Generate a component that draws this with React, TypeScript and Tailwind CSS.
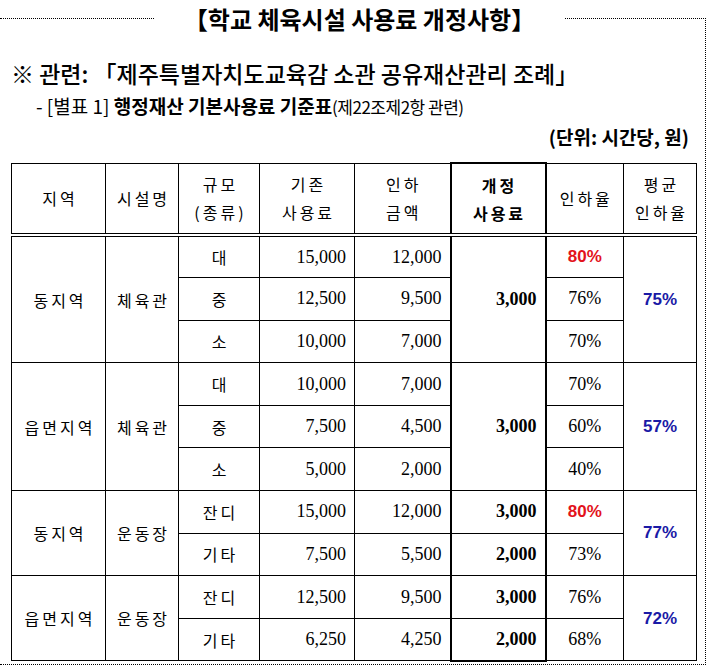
import React from "react";

const KR = "font-['Noto_Sans_CJK_KR',sans-serif]";
const CELL = "font-['Liberation_Serif','Noto_Sans_CJK_KR',serif]";

type Item = {
  size: string;
  oldFee: string;
  cut: string;
  rate: string;
  red?: boolean;
  fee?: string;
};

type Group = {
  region: string;
  facility: string;
  avg: string;
  fee?: string;
  items: Item[];
};

const GROUPS: Group[] = [
  {
    region: "동지역",
    facility: "체육관",
    avg: "75%",
    fee: "3,000",
    items: [
      { size: "대", oldFee: "15,000", cut: "12,000", rate: "80%", red: true },
      { size: "중", oldFee: "12,500", cut: "9,500", rate: "76%" },
      { size: "소", oldFee: "10,000", cut: "7,000", rate: "70%" },
    ],
  },
  {
    region: "읍면지역",
    facility: "체육관",
    avg: "57%",
    fee: "3,000",
    items: [
      { size: "대", oldFee: "10,000", cut: "7,000", rate: "70%" },
      { size: "중", oldFee: "7,500", cut: "4,500", rate: "60%" },
      { size: "소", oldFee: "5,000", cut: "2,000", rate: "40%" },
    ],
  },
  {
    region: "동지역",
    facility: "운동장",
    avg: "77%",
    items: [
      { size: "잔디", oldFee: "15,000", cut: "12,000", rate: "80%", red: true, fee: "3,000" },
      { size: "기타", oldFee: "7,500", cut: "5,500", rate: "73%", fee: "2,000" },
    ],
  },
  {
    region: "읍면지역",
    facility: "운동장",
    avg: "72%",
    items: [
      { size: "잔디", oldFee: "12,500", cut: "9,500", rate: "76%", fee: "3,000" },
      { size: "기타", oldFee: "6,250", cut: "4,250", rate: "68%", fee: "2,000" },
    ],
  },
];

const th =
  "border-t border-x border-b-4 [border-bottom-style:double] border-black p-0 font-normal text-[16px] leading-[28px] tracking-[3px] pl-[3px] text-center";
const td = "border border-black p-0";
const feeTd = "border-t border-x-2 border-black p-0 text-right pr-[8px] font-bold text-[18px]";
const korTd = `${td} ${KR} text-[16px] tracking-[3px] pl-[3px] text-center`;
const numTd = `${td} text-[18px] text-right pr-[8px]`;

export default function App() {
  return (
    <div className="w-[707px] h-[668px] bg-white text-black overflow-hidden">
      <div className="w-[706px] h-[647px] mt-[18px] border-t border-r border-b border-dotted border-black">
        <div className="flex justify-center pl-[14px] -mt-[13px] h-[26px]">
          <span className={`${KR} bg-white px-[29px] text-[24px] leading-[26px] font-bold`}>
            【학교 체육시설 사용료 개정사항】
          </span>
        </div>

        <div className={`${KR} mt-[27px] ml-[11px] h-[28px] text-[23px] leading-[28px] font-medium`}>
          ※ 관련: 「제주특별자치도교육감 소관 공유재산관리 조례」
        </div>

        <div className={`${KR} mt-[8px] ml-[36px] h-[22px] text-[19px] leading-[22px]`}>
          - [별표 1] <span className="font-bold">행정재산 기본사용료 기준표</span>
          <span className="text-[17px] tracking-[-0.5px]">(제22조제2항 관련)</span>
        </div>

        <div className={`${KR} mt-[8px] h-[24px] pr-[16px] text-right text-[19px] leading-[24px] font-bold`}>
          (단위: 시간당, 원)
        </div>

        <table className={`${CELL} mt-[13px] ml-[11px] w-[685px] table-fixed border-collapse`}>
          <colgroup>
            <col className="w-[94px]" />
            <col className="w-[73px]" />
            <col className="w-[81px]" />
            <col className="w-[95px]" />
            <col className="w-[96px]" />
            <col className="w-[95px]" />
            <col className="w-[78px]" />
            <col className="w-[73px]" />
          </colgroup>
          <thead>
            <tr className={`${KR} h-[72px]`}>
              <th className={th}>지역</th>
              <th className={th}>시설명</th>
              <th className={th}>
                규모
                <br />
                (종류)
              </th>
              <th className={th}>
                기존
                <br />
                사용료
              </th>
              <th className={th}>
                인하
                <br />
                금액
              </th>
              <th className="border-t-2 border-x-2 border-b-4 [border-bottom-style:double] border-black p-0 font-bold text-[16px] leading-[28px] tracking-[3px] pl-[3px] text-center">
                개정
                <br />
                사용료
              </th>
              <th className={th}>인하율</th>
              <th className={th}>
                평균
                <br />
                인하율
              </th>
            </tr>
          </thead>
          <tbody>
            {GROUPS.map((g, gi) =>
              g.items.map((it, i) => {
                const lastGroup = gi === GROUPS.length - 1;
                const lastRow = lastGroup && i === g.items.length - 1;
                return (
                  <tr key={`${gi}-${i}`} className="h-[42.6px]">
                    {i === 0 && (
                      <td rowSpan={g.items.length} className={korTd}>
                        {g.region}
                      </td>
                    )}
                    {i === 0 && (
                      <td rowSpan={g.items.length} className={korTd}>
                        {g.facility}
                      </td>
                    )}
                    <td className={korTd}>{it.size}</td>
                    <td className={numTd}>{it.oldFee}</td>
                    <td className={numTd}>{it.cut}</td>
                    {g.fee && i === 0 && (
                      <td rowSpan={g.items.length} className={`${feeTd} border-b`}>
                        {g.fee}
                      </td>
                    )}
                    {it.fee && (
                      <td className={`${feeTd} ${lastRow ? "border-b-2" : "border-b"}`}>{it.fee}</td>
                    )}
                    <td className={`${td} text-center`}>
                      {it.red ? (
                        <span className="font-['Liberation_Sans',sans-serif] font-bold text-[17px] text-[#e3121b]">
                          {it.rate}
                        </span>
                      ) : (
                        <span className="text-[18px]">{it.rate}</span>
                      )}
                    </td>
                    {i === 0 && (
                      <td
                        rowSpan={g.items.length}
                        className={`${td} text-center font-['Liberation_Sans',sans-serif] font-bold text-[17px] text-[#1a1aa6]`}
                      >
                        {g.avg}
                      </td>
                    )}
                  </tr>
                );
              })
            )}
          </tbody>
        </table>
      </div>
    </div>
  );
}
